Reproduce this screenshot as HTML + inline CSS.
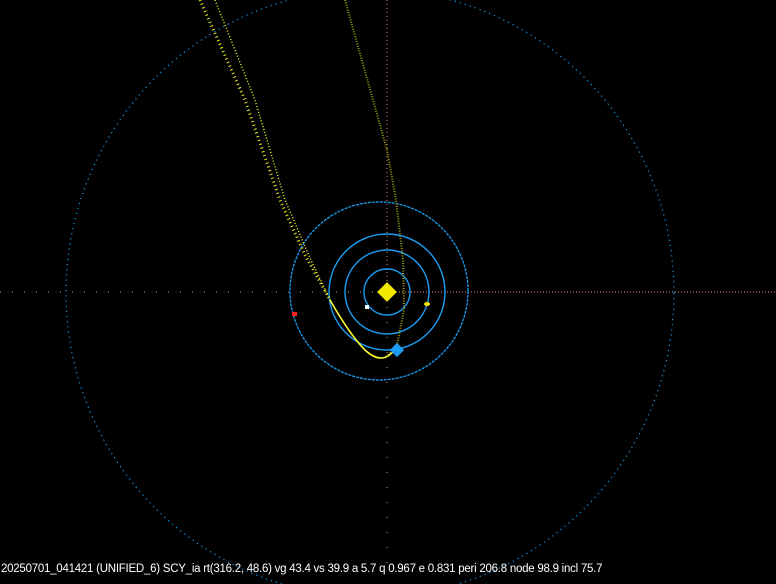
<!DOCTYPE html>
<html><head><meta charset="utf-8"><style>
html,body{margin:0;padding:0;background:#000;width:776px;height:584px;overflow:hidden}
svg{position:absolute;left:0;top:0}
.t{position:absolute;left:1px;top:563px;color:#fff;font-family:"Liberation Sans",sans-serif;font-size:11.5px;white-space:nowrap;letter-spacing:-0.25px}
</style></head><body>
<svg width="776" height="584">
<line x1="0" y1="292" x2="387" y2="292" stroke="#e08a80" stroke-width="1" stroke-dasharray="1 11"/>
<line x1="387" y1="292" x2="776" y2="292" stroke="#e08a80" stroke-width="1" stroke-dasharray="1 2"/>
<line x1="387" y1="0" x2="387" y2="292" stroke="#e08a80" stroke-width="1" stroke-dasharray="1 3"/>
<line x1="387" y1="292" x2="387" y2="565" stroke="#e08a80" stroke-width="1" stroke-dasharray="1 14"/>
<circle cx="370" cy="293" r="304" fill="none" stroke="#1a9cf0" stroke-width="1.2" stroke-dasharray="1.2 4"/>
<circle cx="379" cy="291" r="89" fill="none" stroke="#1a9cf0" stroke-width="1.3" stroke-dasharray="3 1"/>
<circle cx="387" cy="292" r="58" fill="none" stroke="#1a9cf0" stroke-width="1.4"/>
<circle cx="387" cy="292" r="42" fill="none" stroke="#1a9cf0" stroke-width="1.4"/>
<circle cx="387" cy="292" r="23" fill="none" stroke="#1a9cf0" stroke-width="1.4"/>
<path d="M345 0 L387 150 L396 200 L403 260 L404 310 L397 345 L385 358" fill="none" stroke="#9a9a10" stroke-width="2" stroke-dasharray="1 1.5"/>
<path d="M200 0 L245 100 L280 200 L305 255 L330 300" fill="none" stroke="#f0f020" stroke-width="3" stroke-dasharray="1 3"/>
<path d="M215 0 L255 100 L285 200 L310 258 L330 300" fill="none" stroke="#f0f020" stroke-width="1.5" stroke-dasharray="1 2"/>
<path d="M330 300 Q350 335 365 350 Q378 362 388 356 L397 349" fill="none" stroke="#ffff30" stroke-width="1.6"/>
<rect x="380" y="285" width="14" height="14" fill="#f0e800" transform="rotate(45 387 292)"/>
<rect x="365" y="305" width="4" height="4" fill="#fff"/>
<ellipse cx="427" cy="304" rx="3" ry="2" fill="#f0e800"/>
<rect x="292" y="312" width="5" height="4" fill="#ff2020"/>
<rect x="392" y="345" width="10" height="10" fill="#1a9cf0" transform="rotate(45 397 350)"/>
</svg>
<div class="t">20250701_041421 (UNIFIED_6) SCY_ia rt(316.2, 48.6) vg 43.4 vs 39.9 a 5.7 q 0.967 e 0.831 peri 206.8 node 98.9 incl 75.7</div>
</body></html>
